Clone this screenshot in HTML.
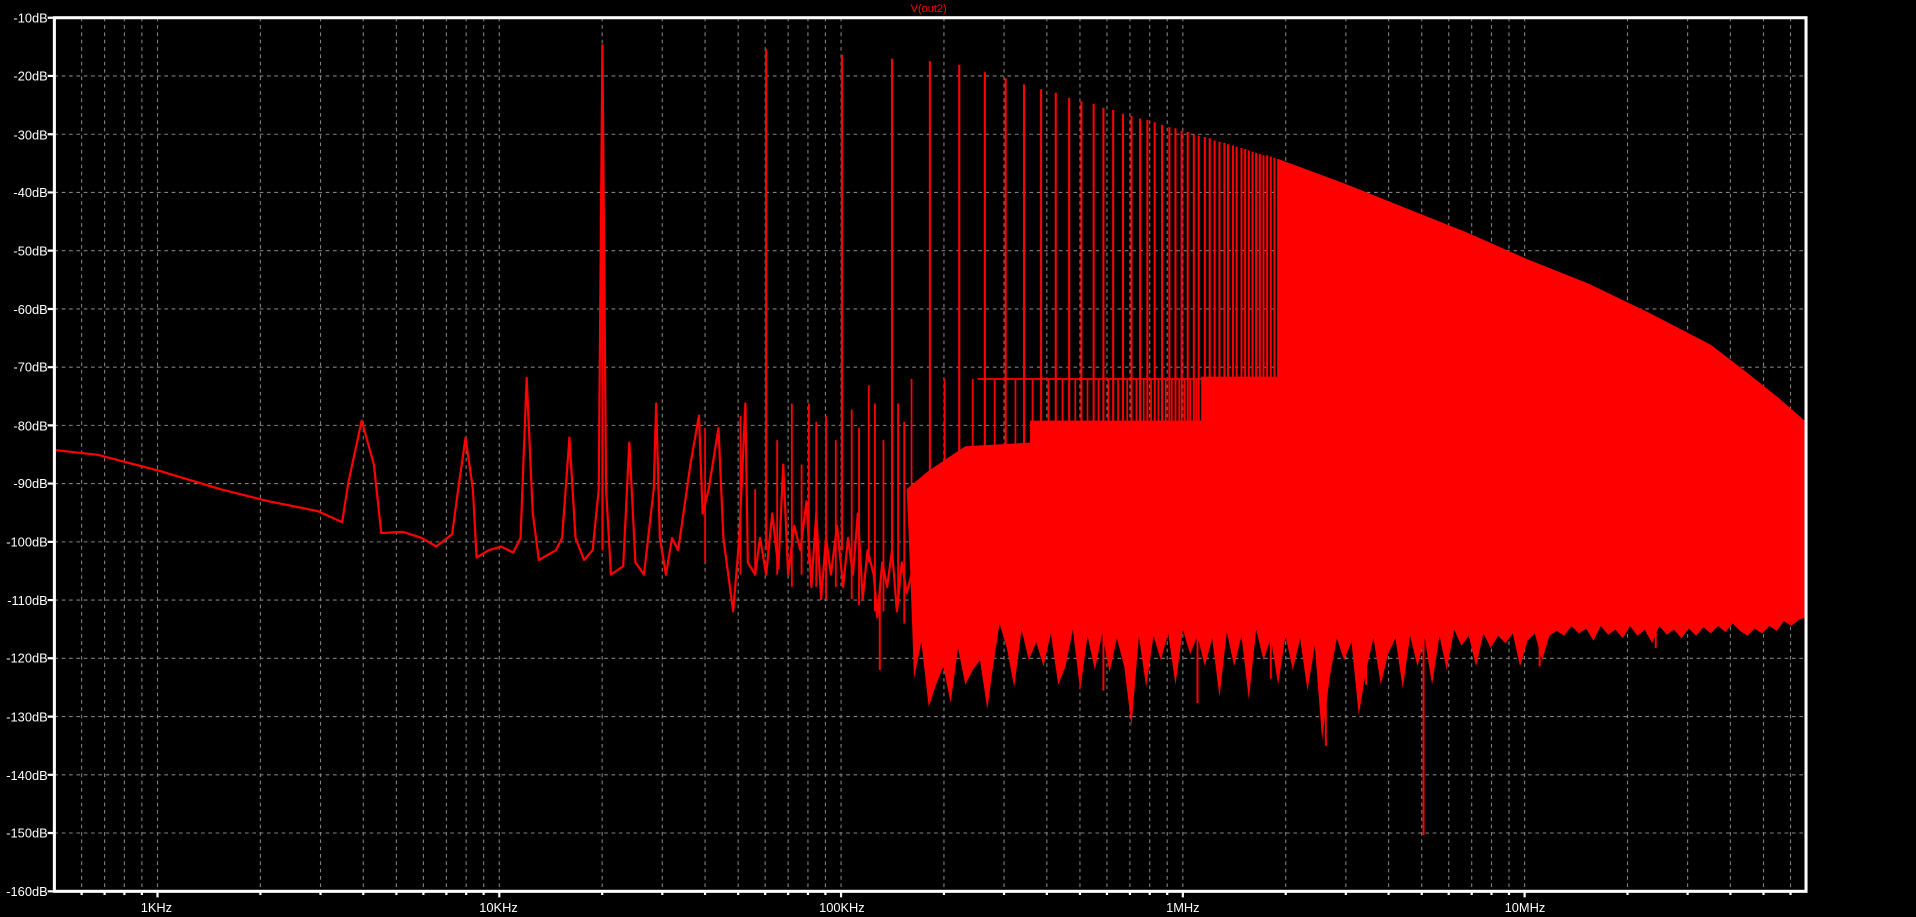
<!DOCTYPE html>
<html><head><meta charset="utf-8">
<style>
html,body{margin:0;padding:0;background:#000;overflow:hidden;}
svg{display:block;}
text{font-family:"Liberation Sans",sans-serif;}
</style></head>
<body>
<svg width="1916" height="917" viewBox="0 0 1568 750" preserveAspectRatio="none" xmlns="http://www.w3.org/2000/svg">
<rect width="1568" height="750" fill="#000"/>
<path stroke="#808080" stroke-width="0.9" stroke-dasharray="3,3" fill="none" d="
M66.8 14.5V729M85.6 14.5V729M101.8 14.5V729M116.1 14.5V729
M128.9 14.5V729M213.1 14.5V729M262.3 14.5V729M297.3 14.5V729M324.4 14.5V729M346.5 14.5V729M365.3 14.5V729M381.5 14.5V729M395.8 14.5V729
M408.6 14.5V729M492.8 14.5V729M542 14.5V729M577 14.5V729M604.1 14.5V729M626.2 14.5V729M645 14.5V729M661.2 14.5V729M675.5 14.5V729
M688.3 14.5V729M772.5 14.5V729M821.7 14.5V729M856.7 14.5V729M883.8 14.5V729M905.9 14.5V729M924.7 14.5V729M940.9 14.5V729M955.2 14.5V729
M968 14.5V729M1052.2 14.5V729M1101.4 14.5V729M1136.4 14.5V729M1163.5 14.5V729M1185.6 14.5V729M1204.4 14.5V729M1220.6 14.5V729M1234.9 14.5V729
M1247.7 14.5V729M1331.9 14.5V729M1381.1 14.5V729M1416.1 14.5V729M1443.2 14.5V729M1465.3 14.5V729
M44.5 62.1H1478M44.5 109.8H1478M44.5 157.4H1478M44.5 205H1478M44.5 252.7H1478M44.5 300.3H1478M44.5 347.9H1478M44.5 395.5H1478M44.5 443.2H1478M44.5 490.8H1478M44.5 538.4H1478M44.5 586.1H1478M44.5 633.7H1478M44.5 681.3H1478"/>

<!-- mass -->
<polygon fill="#ff0000" points="742,400 760,385 790,365 843,362 843,344 983,344 983,308 1046,308 1046,130 1100,150 1150,170 1200,190 1250,212 1300,232 1350,256 1400,282 1430,305 1455,325 1478,345
1478,505 1472,507 1466,512 1460,508 1454,516 1448,512 1442,518 1436,514 1430,520 1424,516 1418,510 1412,517 1406,512 1400,518 1394,513 1388,520 1382,514 1376,522 1370,515 1364,519 1358,512 1352,526 1346,515 1340,520 1334,512 1328,522 1322,515 1316,519 1310,512 1304,524 1298,514 1292,518 1286,512 1280,520 1274,516 1268,520 1262,540 1256,518 1250,524 1244,545 1238,518 1232,526 1226,520 1220,530 1214,518 1208,545 1202,520 1196,528 1190,515 1184,548 1178,520 1172,560 1166,522 1160,545 1154,520 1148,563 1142,522 1136,535 1130,560 1124,522 1118,548 1112,585 1106,525 1100,540 1094,522 1088,555 1082,605 1076,528 1070,565 1064,522 1058,548 1052,520 1046,560 1040,522 1034,540 1028,515 1022,572 1016,520 1010,545 1004,517 998,570 992,522 986,545 980,520 974,535 968,515 962,560 956,518 950,540 944,520 938,562 932,520 926,594 920,545 914,522 908,550 902,518 896,548 890,520 884,565 878,515 872,545 866,560 860,518 854,545 848,525 842,540 836,515 830,562 824,530 818,510 812,550 808,580 802,540 796,548 790,560 784,530 778,575 772,545 766,560 760,578 754,525 748,555 745,470"/>
<path stroke="#f00" stroke-width="1.6" fill="none" d="M1165 500V683M1118 500V560M980 500V575M1040 500V555M1260 500V545M1355 500V530M903 500V565M762 500V560M720 480V548M1085 500V610"/>

<!-- low frequency trace -->
<polyline fill="none" stroke="#f00" stroke-width="1.8" stroke-linejoin="round" points="44,368 80,372 130,385 180,400 220,410 260,418 280,427 285,395 296,344 306,380 312,436 330,435 345,440 357,447 370,437 375,400 381,358 387,400 390,456 400,450 410,447 420,452 426,440 431,309 436,420 441,458 455,450 460,440 466,358 471,440 478,458 485,450 490,400 493,37 496,400 500,470 510,463 515,362 520,460 527,470 535,400 537,330 540,440 545,470 550,440 555,450 565,380 572,340 575,420 580,400 588,350 592,440 600,500 605,440 610,330 612,460 618,470 622,440 627,470 632,420 637,465 641,380 645,470 650,430 655,450 660,410 664,480 668,420 672,490 676,440 680,470 685,430 690,480 694,440 698,470 702,420 706,490 710,450 715,470 718,505 722,460 726,480 730,450 734,500 738,460 742,485 746,470"/>
<path fill="none" stroke="#f00" stroke-width="1.5" d="M606 340V470M618 400V470M636 360V470M648 330V480M656 380V470M668 345V480M676 340V490M684 360V480M697 335V490M703 350V495M716 330V500M723 360V500M735 330V495M740 345V510"/>

<!-- even harmonics -72dB -->
<path fill="none" stroke="#f00" stroke-width="1.4" d="M577 350V460M662 330V460M711 315V460M746 310V420M773 310V420M796 310V420M814 310V420M831 310V420M845 310V420M858 310V420M869.5 310V420M880 310V420M890 310V420M899 310V420M907 310V420M915 310V420M922.5 310V420M930 310V420M936 310V420M942 310V420M948 310V420M954 310V420M959 310V420M965 310V420M969.5 310V420M974 310V420M979 310V420M800 310H983"/>
<!-- odd harmonics -->
<path fill="none" stroke="#f00" stroke-width="1.7" d="M493 37V450M627 40V450M689 45V450M730 48V450M761 50V420M785 53V420M806 59V420M823 64V420M838 69V420M852 73V420M864 76V420M875 80V420M885 83V420M895 85V420M903 88V420M911 90V420M919 93V420M926 95V420M933 97V420M939 98V420M945 100V420M951 102V420M957 104V420M962 105V420M967 107V420M972 108V420M977 110V420M981 111V420M986 112V420M990 113V420M994 115V420M998 116V420M1002 117V420M1005 118V420M1009 119V420M1012 120V420M1016 121V420M1019 122V420M1022 123V420M1025 124V420M1028 125V420M1031 126V420M1034 127V420M1037 127V420M1040 128V420M1043 129V420M1046 130V420"/>

<rect x="44.5" y="14.5" width="1433.5" height="714.5" fill="none" stroke="#fff" stroke-width="2.5"/>
<path stroke="#fff" stroke-width="1.8" fill="none" d="M39 14.5H44.5M39 62.1H44.5M39 109.8H44.5M39 157.4H44.5M39 205H44.5M39 252.7H44.5M39 300.3H44.5M39 347.9H44.5M39 395.5H44.5M39 443.2H44.5M39 490.8H44.5M39 538.4H44.5M39 586.1H44.5M39 633.7H44.5M39 681.3H44.5M39 729H44.5
M66.8 729v3M85.6 729v3M101.8 729v3M116.1 729v3M128.9 729v5M213.1 729v3M262.3 729v3M297.3 729v3M324.4 729v3M346.5 729v3M365.3 729v3M381.5 729v3M395.8 729v3M408.6 729v5M492.8 729v3M542 729v3M577 729v3M604.1 729v3M626.2 729v3M645 729v3M661.2 729v3M675.5 729v3M688.3 729v5M772.5 729v3M821.7 729v3M856.7 729v3M883.8 729v3M905.9 729v3M924.7 729v3M940.9 729v3M955.2 729v3M968 729v5M1052.2 729v3M1101.4 729v3M1136.4 729v3M1163.5 729v3M1185.6 729v3M1204.4 729v3M1220.6 729v3M1234.9 729v3M1247.7 729v5M1331.9 729v3M1381.1 729v3M1416.1 729v3M1443.2 729v3M1465.3 729v3"/>
<g fill="#fff" font-size="10.5" text-anchor="end">
<text x="39" y="18.5">-10dB</text><text x="39" y="66">-20dB</text><text x="39" y="114">-30dB</text><text x="39" y="161">-40dB</text><text x="39" y="209">-50dB</text><text x="39" y="257">-60dB</text><text x="39" y="304">-70dB</text><text x="39" y="352">-80dB</text><text x="39" y="399">-90dB</text><text x="39" y="447">-100dB</text><text x="39" y="495">-110dB</text><text x="39" y="542">-120dB</text><text x="39" y="590">-130dB</text><text x="39" y="638">-140dB</text><text x="39" y="685">-150dB</text><text x="39" y="733">-160dB</text>
</g>
<g fill="#fff" font-size="10.5" text-anchor="middle">
<text x="128" y="746">1KHz</text><text x="408" y="746">10KHz</text><text x="689" y="746">100KHz</text><text x="968" y="746">1MHz</text><text x="1248" y="746">10MHz</text>
</g>
<text x="760" y="10" fill="#ff0000" font-size="9" text-anchor="middle">V(out2)</text>
</svg>
</body></html>
